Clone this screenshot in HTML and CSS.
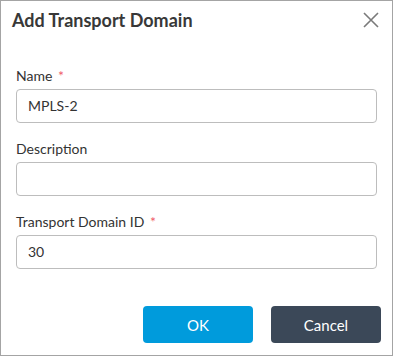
FILE: index.html
```html
<!DOCTYPE html>
<html>
<head>
<meta charset="utf-8">
<link rel="stylesheet" href="styles.css">
</head>
<body>
<div class="dialog">
  <div class="header">
    <div class="title">Add Transport Domain</div>
    <div class="close" aria-label="Close">
      <svg width="16" height="16" viewBox="0 0 16 16"><path d="M1 1 L15 15 M15 1 L1 15" stroke="#7a7a7a" stroke-width="1.6" fill="none"/></svg>
    </div>
  </div>
  <div class="form">
    <div class="field">
      <label class="label">Name <span class="req">*</span></label>
      <div class="input">MPLS-2</div>
    </div>
    <div class="field">
      <label class="label">Description</label>
      <div class="input"></div>
    </div>
    <div class="field">
      <label class="label">Transport Domain ID <span class="req">*</span></label>
      <div class="input">30</div>
    </div>
  </div>
  <div class="footer">
    <button class="btn btn-ok">OK</button>
    <button class="btn btn-cancel">Cancel</button>
  </div>
</div>
</body>
</html>
```
FILE: styles.css
```css
html, body {
  margin: 0;
  padding: 0;
  background: #ffffff;
}
.dialog {
  width: 393px;
  height: 356px;
  box-sizing: border-box;
  border: 1px solid #a4a4a4;
  background: #fff;
  display: flex;
  flex-direction: column;
  font-family: Lato, "Liberation Sans", sans-serif;
  color: #333;
}
.header {
  display: flex;
  justify-content: space-between;
  align-items: center;
  padding: 7px 13px 0 11px;
  height: 24px;
}
.title {
  font-size: 18px;
  font-weight: 700;
  line-height: 24px;
  color: #383838;
}
.close {
  width: 16px;
  height: 16px;
  display: flex;
}
.form {
  padding: 34px 15px 0 15px;
}
.field {
  margin-bottom: 16px;
}
.field:last-child {
  margin-bottom: 0;
}
.label {
  display: block;
  font-size: 14px;
  line-height: 20px;
  margin-bottom: 3px;
  color: #333;
}
.req {
  color: #ef5b6a;
  margin-left: 2px;
}
.input {
  height: 34px;
  box-sizing: border-box;
  border: 1px solid #bdbdbd;
  border-radius: 4px;
  padding: 0 11px;
  font-size: 14px;
  line-height: 32px;
  color: #333;
}
.footer {
  display: flex;
  justify-content: flex-end;
  gap: 18px;
  padding: 0 11px 0 0;
  margin-top: 37px;
}
.btn {
  width: 110px;
  height: 37px;
  border: none;
  border-radius: 4px;
  font-family: Lato, "Liberation Sans", sans-serif;
  font-size: 15px;
  color: #fff;
  padding: 0;
}
.btn-ok {
  background: #009bdc;
}
.btn-cancel {
  background: #3b4858;
}
```
